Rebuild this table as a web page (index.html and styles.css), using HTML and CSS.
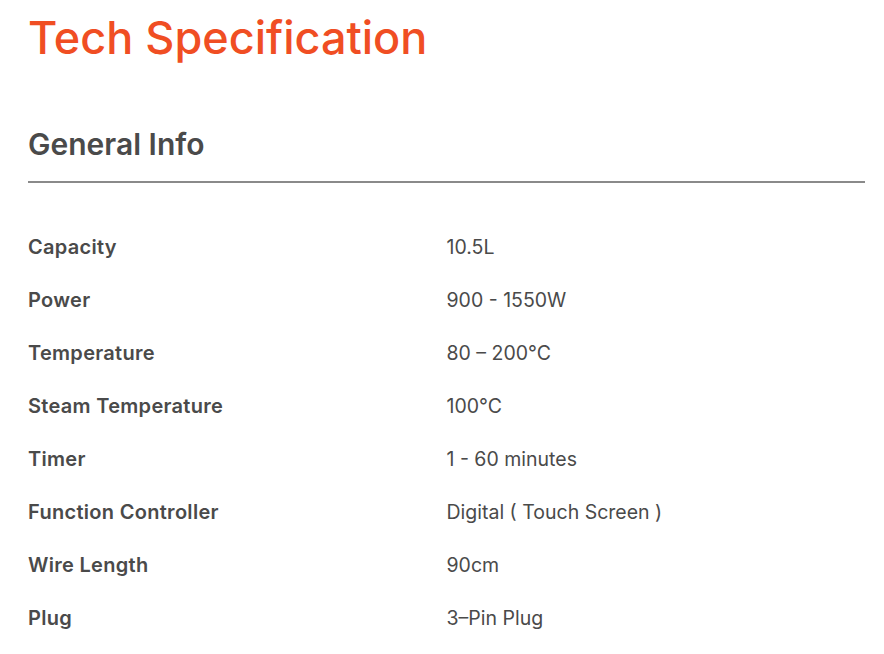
FILE: index.html
```html
<!DOCTYPE html>
<html lang="en">
<head>
<meta charset="utf-8">
<title>Tech Specification</title>
<link rel="stylesheet" href="styles.css">
</head>
<body>
<main class="spec">
  <h1 class="spec-title">Tech Specification</h1>
  <section class="spec-group">
    <h2 class="group-title">General Info</h2>
    <dl class="spec-list">
      <div class="spec-row"><dt>Capacity</dt><dd>10.5L</dd></div>
      <div class="spec-row"><dt>Power</dt><dd>900 - 1550W</dd></div>
      <div class="spec-row"><dt>Temperature</dt><dd>80 – 200°C</dd></div>
      <div class="spec-row"><dt>Steam Temperature</dt><dd>100°C</dd></div>
      <div class="spec-row"><dt>Timer</dt><dd>1 - 60 minutes</dd></div>
      <div class="spec-row"><dt>Function Controller</dt><dd>Digital ( Touch Screen )</dd></div>
      <div class="spec-row"><dt>Wire Length</dt><dd>90cm</dd></div>
      <div class="spec-row"><dt>Plug</dt><dd>3–Pin Plug</dd></div>
    </dl>
  </section>
</main>
</body>
</html>
```

FILE: styles.css
```css
* { box-sizing: border-box; }
html, body { background: #ffffff; }
body {
  margin: 0;
  font-family: "Inter", "Open Sans", sans-serif;
  color: #4a4a4a;
}
.spec {
  padding: 10px 19px 0 28px;
}
.spec-title {
  margin: 0;
  font-size: 45px;
  line-height: 56px;
  font-weight: 500;
  color: #f04e23;
  letter-spacing: 0;
}
.spec-group {
  margin-top: 60px;
}
.group-title {
  margin: 0;
  font-size: 30px;
  line-height: 36px;
  font-weight: 600;
  color: #4a4a4a;
  letter-spacing: 0;
  padding-bottom: 19px;
  border-bottom: 2px solid #8a8a8a;
}
.spec-list {
  margin: 52px 0 0 0;
  display: flex;
  flex-direction: column;
  gap: 29px;
}
.spec-row {
  display: grid;
  grid-template-columns: 1fr 1fr;
  line-height: 24px;
}
.spec-row dt {
  font-size: 20px;
  font-weight: 600;
  letter-spacing: 0.3px;
}
.spec-row dd {
  margin: 0;
  font-size: 19.5px;
  font-weight: 400;
}
```
